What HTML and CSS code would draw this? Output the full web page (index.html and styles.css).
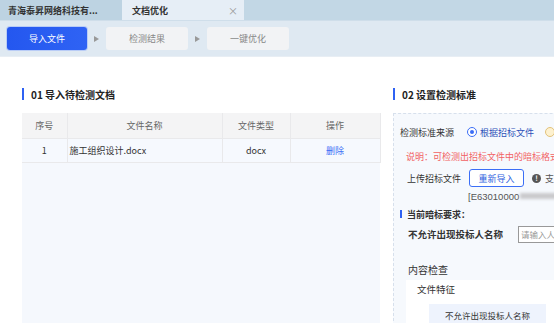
FILE: index.html
```html
<!DOCTYPE html>
<html lang="zh">
<head>
<meta charset="utf-8">
<link rel="stylesheet" href="styles.css">
</head>
<body>
<div class="app">
  <div class="tabs">
    <div class="tab">青海泰昇网络科技有...</div>
    <div class="tab active"><span>文档优化</span><span class="close">×</span></div>
  </div>
  <div class="steps">
    <div class="step current">导入文件</div>
    <div class="arrow"></div>
    <div class="step">检测结果</div>
    <div class="arrow"></div>
    <div class="step">一键优化</div>
  </div>
  <div class="main">
    <div class="left">
      <div class="title"><span class="bar"></span>01 导入待检测文档</div>
      <div class="tablewrap">
        <table class="grid">
          <colgroup><col class="c1"><col class="c2"><col class="c3"><col class="c4"></colgroup>
          <thead><tr><th>序号</th><th>文件名称</th><th>文件类型</th><th>操作</th></tr></thead>
          <tbody><tr><td>1</td><td class="name">施工组织设计.docx</td><td>docx</td><td><span class="link">删除</span></td></tr></tbody>
        </table>
        <div class="empty"></div>
      </div>
    </div>
    <div class="right">
      <div class="title"><span class="bar"></span>02 设置检测标准</div>
      <div class="panel">
        <div class="row source">
          <span class="label">检测标准来源</span>
          <span class="radio on"></span><span class="rtext">根据招标文件</span>
          <span class="radio off"></span>
        </div>
        <div class="note">说明：可检测出招标文件中的暗标格式</div>
        <div class="row upload">
          <span class="label">上传招标文件</span>
          <span class="btn">重新导入</span>
          <span class="info">!</span><span class="tip">支</span>
        </div>
        <div class="path"><span>[E63010000</span><span class="blur"></span></div>
        <div class="req"><span class="minibar"></span>当前暗标要求：</div>
        <div class="row rule">
          <span class="rlabel">不允许出现投标人名称</span>
          <span class="input">请输入人人</span>
        </div>
        <div class="sub">内容检查</div>
        <div class="card">
          <div class="cardtitle">文件特征</div>
          <div class="chip">不允许出现投标人名称</div>
        </div>
      </div>
    </div>
  </div>
</div>
</body>
</html>
```

FILE: styles.css
```css
* { box-sizing: border-box; margin: 0; padding: 0; }
html, body { width: 554px; height: 323px; overflow: hidden; background: #fff; }
body { font-family: "Noto Sans CJK SC", "Noto Sans", sans-serif; font-size: 9px; color: #333; }
.app { width: 554px; height: 323px; display: flex; flex-direction: column; }

.tabs { height: 20px; background: #c2d7e5; display: flex; flex: none; }
.tab { width: 122px; padding-left: 8px; display: flex; align-items: center; font-weight: bold; color: #333; background: #bdd3e2; font-size: 9px; }
.tab.active { background: #e6eef6; padding-left: 10px; padding-right: 6px; justify-content: space-between; }
.tab .close { color: #999; font-weight: normal; font-size: 10px; }

.steps { height: 37px; background: #dfe9f2; border-top: 1px solid #cfdeea; border-bottom: 1px solid #e8eef4; display: flex; align-items: center; padding-left: 7px; flex: none; }
.step { width: 82px; height: 23px; border-radius: 3px; background: #f2f3f5; color: #888; display: flex; align-items: center; justify-content: center; font-size: 9px; }
.step.current { width: 80px; background: linear-gradient(90deg, #2457ef, #2f63f4); color: #fff; box-shadow: 0 0 0 1px #b9ccf6; }
.arrow { width: 19px; display: flex; justify-content: center; }
.arrow::before { content: ""; border-left: 5px solid #999; border-top: 3px solid transparent; border-bottom: 3px solid transparent; }

.main { flex: 1; display: flex; padding-top: 30px; min-height: 0; }
.left { width: 380px; padding-left: 22px; flex: none; display: flex; flex-direction: column; }
.right { width: 200px; margin-left: 13px; flex: none; display: flex; flex-direction: column; }
.title { height: 14px; display: flex; align-items: center; font-size: 10px; font-weight: bold; color: #222; gap: 7px; margin-bottom: 12px; }
.bar { width: 2px; height: 12px; background: #2f62f3; }

.tablewrap { flex: 1; display: flex; flex-direction: column; }
.grid { width: 358px; border-collapse: collapse; table-layout: fixed; }
.c1 { width: 45px; } .c2 { width: 155px; } .c3 { width: 68px; } .c4 { width: 90px; }
.grid th { height: 25px; background: #f4f4f5; color: #666; font-weight: normal; border: 1px solid #e9e9eb; border-top: none; }
.grid td { height: 24px; background: #f6f9fe; text-align: center; border: 1px solid #e9e9eb; color: #333; }
.grid td.name { text-align: left; padding-left: 2px; }
.grid th:first-child, .grid td:first-child { border-left: none; }
.link { color: #3b6ef6; }
.empty { flex: 1; width: 358px; background: #f5f8fd; }

.panel { flex: 1; border: 1px dashed #d7e0ec; border-right: none; border-bottom: none; background: #f6f9fd; padding: 9px 0 0 6px; display: flex; flex-direction: column; }
.row { display: flex; align-items: center; }
.source { height: 18px; }
.label { color: #333; }
.radio { width: 10px; height: 10px; border-radius: 50%; flex: none; }
.radio.on { margin-left: 13px; border: 1px solid #3b6ef6; background: #fff; position: relative; }
.radio.on::after { content: ""; position: absolute; left: 2px; top: 2px; width: 4px; height: 4px; border-radius: 50%; background: #3b6ef6; }
.rtext { margin-left: 3px; color: #2b4fb8; }
.radio.off { margin-left: 11px; border: 1px solid #e2c27a; background: #fdf1cf; }
.note { color: #f26264; margin: 10px 0 0 6px; height: 12px; line-height: 12px; white-space: nowrap; }
.upload { margin: 6px 0 0 7px; height: 18px; }
.btn { margin-left: 8px; width: 55px; height: 18px; border: 1px solid #3b6ef6; border-radius: 3px; background: #fff; color: #2f5fe0; display: flex; align-items: center; justify-content: center; }
.info { margin-left: 8px; width: 9px; height: 9px; border-radius: 50%; background: #555; color: #fff; font-size: 7px; font-weight: bold; display: flex; align-items: center; justify-content: center; }
.tip { margin-left: 4px; color: #555; }
.path { margin: 3px 0 0 68px; height: 12px; display: flex; align-items: center; font-family: "Liberation Sans", sans-serif; font-size: 9.5px; color: #555; white-space: nowrap; }
.blur { width: 60px; height: 6px; background: #c9c9cc; filter: blur(1.5px); margin-left: 1px; }
.req { margin: 6px 0 0 0; height: 12px; display: flex; align-items: center; font-weight: bold; color: #333; gap: 5px; }
.minibar { width: 2px; height: 8px; background: #2f62f3; }
.rule { margin: 5px 0 0 8px; height: 18px; }
.rlabel { font-weight: bold; color: #333; width: 110px; font-size: 9.5px; }
.input { width: 60px; height: 17px; border: 1px solid #999; background: #fff; color: #999; padding-left: 2px; display: flex; align-items: center; font-size: 8.5px; }
.sub { margin: 20px 0 0 8px; font-size: 10px; color: #333; height: 14px; line-height: 14px; }
.card { margin: 3px 0 0 6px; flex: 1; background: #fff; padding: 2px 0 0 11px; }
.cardtitle { font-size: 9.5px; color: #333; height: 14px; line-height: 14px; }
.chip { margin: 8px 0 0 12px; width: 117px; height: 22px; background: #eef3fd; display: flex; align-items: center; justify-content: center; font-size: 8.5px; color: #333; }
```
